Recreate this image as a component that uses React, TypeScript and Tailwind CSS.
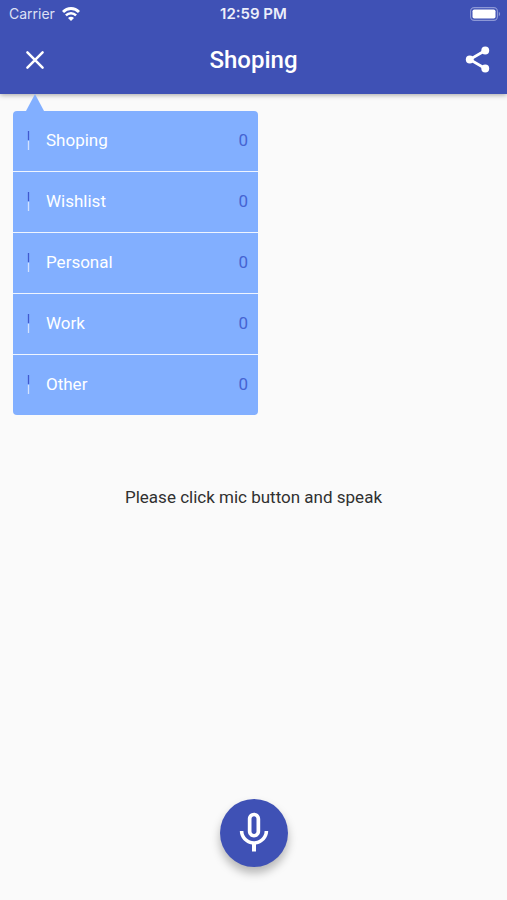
interface Category {
  name: string;
  count: number;
}

const categories: Category[] = [
  { name: "Shoping", count: 0 },
  { name: "Wishlist", count: 0 },
  { name: "Personal", count: 0 },
  { name: "Work", count: 0 },
  { name: "Other", count: 0 },
];

const WifiIcon = () => (
  <svg width="18" height="14" viewBox="0 0 18 14" fill="none" stroke="#fff">
    <path d="M1 5C5.4 0.4 12.6 0.4 17 5" strokeWidth="2.9" />
    <path d="M3.9 8.4C6.8 5.5 11.2 5.5 14.1 8.4" strokeWidth="2.5" />
    <path d="M9 13.9L6 10.9C7.7 9.2 10.3 9.2 12 10.9Z" fill="#fff" stroke="none" />
  </svg>
);

const BatteryIcon = () => (
  <svg width="31" height="14" viewBox="0 0 31 14">
    <rect
      x="0.6"
      y="0.6"
      width="26.8"
      height="12.8"
      rx="3.6"
      fill="none"
      stroke="#8d98d6"
      strokeWidth="1.1"
    />
    <rect x="2.5" y="2.5" width="23" height="9" rx="1.8" fill="#fff" />
    <path d="M28.8 4.8C30.6 5.6 30.6 8.4 28.8 9.2Z" fill="#8d98d6" />
  </svg>
);

const CloseIcon = () => (
  <svg width="30" height="30" viewBox="0 0 30 30" stroke="currentColor">
    <path
      d="M7.4 7.4L22.6 22.6M22.6 7.4L7.4 22.6"
      strokeWidth="2.5"
      strokeLinecap="round"
    />
  </svg>
);

const ShareIcon = () => (
  <svg width="31" height="31" viewBox="0 0 24 24" fill="currentColor">
    <path
      d="M18 5L6 12L18 19"
      fill="none"
      stroke="currentColor"
      strokeWidth="2.1"
    />
    <circle cx="18" cy="5" r="3.05" />
    <circle cx="6" cy="12" r="3.05" />
    <circle cx="18" cy="19" r="3.05" />
  </svg>
);

const MicIcon = () => (
  <svg width="48" height="48" viewBox="0 0 24 24" fill="currentColor">
    <path d="M12 14.2c1.72 0 3.1-1.4 3.1-3.1V5c0-1.72-1.4-3.1-3.1-3.1S8.9 3.28 8.9 5v6.1c0 1.7 1.38 3.1 3.1 3.1zm-1.25-9.3c0-.7.55-1.25 1.25-1.25s1.25.55 1.25 1.25v6.3c0 .7-.55 1.25-1.25 1.25s-1.25-.55-1.25-1.25V4.9zm6.55 6.1c0 3-2.54 5.1-5.3 5.1S6.7 14 6.7 11H4.9c0 3.41 2.78 6.25 6.1 6.74V21.2h2v-3.46c3.32-.49 6.1-3.33 6.1-6.74h-1.8z" />
  </svg>
);

const StatusBar = () => (
  <div className="grid h-[27px] grid-cols-3 items-center px-1.5 font-['Inter',sans-serif] text-sm text-white">
    <div className="flex items-center gap-[7px] pl-[3px] text-[#dde0f4]">
      Carrier
      <WifiIcon />
    </div>
    <span className="text-center text-[15px] font-semibold text-[#eceefa]">
      12:59 PM
    </span>
    <div className="flex justify-end">
      <BatteryIcon />
    </div>
  </div>
);

const CategoryMenu = () => (
  <nav aria-label="Lists" className="ml-[13px] w-[245px]">
    <svg width="18" height="17" viewBox="0 0 18 17" className="ml-[13px] block">
      <path d="M9 0L18 17H0Z" fill="#82afff" />
    </svg>
    <ul className="divide-y divide-[#eff5ff] overflow-hidden rounded bg-[#82afff]">
      {categories.map((category) => (
        <li key={category.name}>
          <button className="flex h-[60px] w-full items-center pr-2.5 pl-3.5 text-left text-[17px] text-white">
            <svg width="3" height="20" viewBox="0 0 3 20" className="mr-4">
              <path d="M1.5 0V9" stroke="#4159cf" strokeWidth="1.3" />
              <path d="M1.5 10V19" stroke="#d3e2ff" strokeWidth="1.3" />
            </svg>
            <span className="flex-1">{category.name}</span>
            <span className="text-[#4564d2]">{category.count}</span>
          </button>
        </li>
      ))}
    </ul>
  </nav>
);

export default function App() {
  return (
    <div className="flex min-h-screen flex-col bg-[#fafafa] font-['Roboto',sans-serif]">
      <header className="bg-[#3f51b5] text-white shadow-[0_1px_5px_rgba(0,0,0,0.35)]">
        <StatusBar />
        <div className="grid h-[67px] grid-cols-[1fr_auto_1fr] items-center pr-3.5 pb-0.5 pl-5">
          <button aria-label="Close" className="justify-self-start">
            <CloseIcon />
          </button>
          <h1 className="pr-1.5 text-2xl font-medium">Shoping</h1>
          <button aria-label="Share" className="justify-self-end">
            <ShareIcon />
          </button>
        </div>
      </header>

      <main className="grid flex-1 grid-rows-[1fr_auto_1fr]">
        <CategoryMenu />
        <p className="text-center text-[17px] leading-5 text-[#303030]">
          Please click mic button and speak
        </p>
        <button
          aria-label="Speak"
          className="mb-[33px] flex size-[68px] items-center justify-center self-end justify-self-center rounded-full bg-[#3f51b5] text-white shadow-[0_6px_10px_rgba(0,0,0,0.28)]"
        >
          <MicIcon />
        </button>
      </main>
    </div>
  );
}
